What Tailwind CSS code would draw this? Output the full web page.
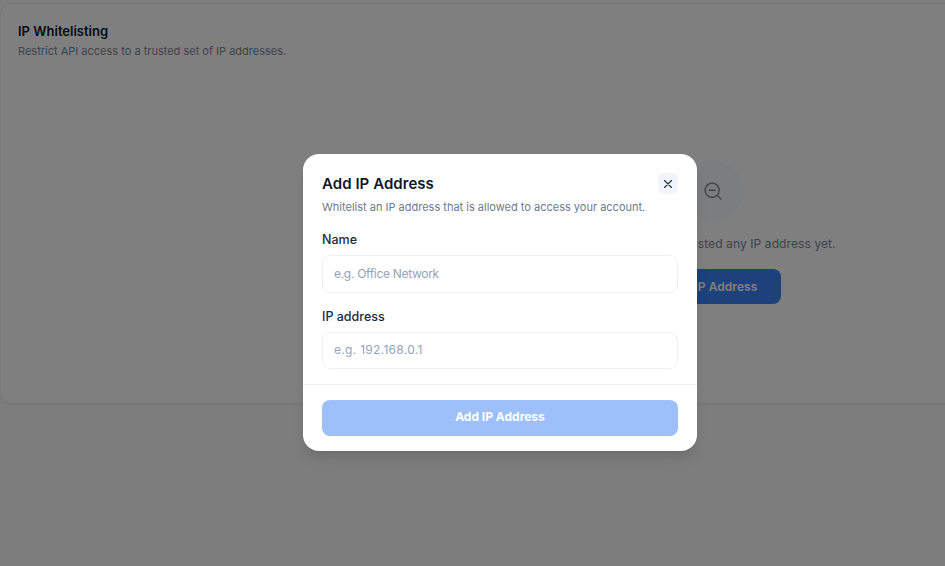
<!DOCTYPE html>
<html lang="en">
  <head>
    <meta charset="UTF-8" />
    <meta name="viewport" content="width=device-width, initial-scale=1.0" />
    <script src="https://cdn.jsdelivr.net/npm/@tailwindcss/browser@4"></script>
    <title>IP Whitelisting</title>
  </head>
  <body class="relative h-[566px] w-[945px] overflow-hidden bg-[#fafafa] font-['Inter',sans-serif]">
    <!-- page behind the modal -->
    <div class="pt-[3px]">
      <section class="h-[401px] w-[1426px] rounded-xl border border-[#eef1f5] bg-white pl-[17px] pt-[18px] shadow-xs">
        <h2 class="text-[13px] leading-[18px] font-semibold text-[#0f172a]">IP Whitelisting</h2>
        <p class="mt-[3px] text-[11px] leading-[16px] text-[#7c8798]">Restrict API access to a trusted set of IP addresses.</p>
        <div class="mt-[102px] flex flex-col items-center pr-[18px]">
          <div class="flex h-[60px] w-[60px] items-center justify-center rounded-full bg-[#f8fafc]">
            <svg class="h-5 w-5 text-[#7c8798]" viewBox="0 0 24 24" fill="none" stroke="currentColor" stroke-width="1.7" stroke-linecap="round">
              <circle cx="11" cy="11" r="8.5" />
              <path d="M7.5 11h7" />
              <path d="M18 18l3.5 3.5" />
            </svg>
          </div>
          <p class="mt-[14px] text-[12px] leading-[18px] tracking-[0.1px] text-[#7c8798]">You haven't whitelisted any IP address yet.</p>
          <button class="mt-[16px] h-[35px] w-[136px] rounded-lg bg-[#3b82f6] text-[12px] font-semibold tracking-[0.05px] text-white">Add IP Address</button>
        </div>
      </section>
    </div>

    <!-- modal -->
    <div class="absolute top-0 left-0 flex h-[566px] w-[1000px] justify-center bg-black/50 pt-[154px]">
      <div class="h-[297px] w-[394px] rounded-[16px] bg-white shadow-lg">
        <div class="px-[19px] pt-[20px]">
          <div class="flex items-start justify-between">
            <h3 class="text-[15px] leading-[20px] font-semibold tracking-[0.05px] text-[#0f172a]">Add IP Address</h3>
            <button class="-mt-px flex h-[21px] w-[20px] items-center justify-center rounded-md bg-[#f1f5f9] text-[#1e293b]">
              <svg class="h-[10px] w-[10px]" viewBox="0 0 10 10" fill="none" stroke="currentColor" stroke-width="1.1" stroke-linecap="round">
                <path d="M1.5 1.5l7 7M8.5 1.5l-7 7" />
              </svg>
            </button>
          </div>
          <p class="mt-[5px] text-[11px] leading-[16px] text-[#6b7a90]">Whitelist an IP address that is allowed to access your account.</p>
          <label class="mt-[16px] block text-[12.5px] leading-[18px] font-medium text-[#1e293b]">Name</label>
          <input class="mt-[6px] block h-[38px] w-full rounded-lg border border-[#eef2f7] px-[11px] pb-[2px] text-[12px] outline-none placeholder:tracking-[-0.3px] placeholder:text-[#94a3b8]" placeholder="e.g. Office Network" />
          <label class="mt-[15px] block text-[12.5px] leading-[18px] font-medium text-[#1e293b]">IP address</label>
          <input class="mt-[6px] block h-[37px] w-full rounded-lg border border-[#eef2f7] px-[11px] pb-[2px] text-[12px] outline-none placeholder:tracking-[0.3px] placeholder:text-[#94a3b8]" placeholder="e.g. 192.168.0.1" />
        </div>
        <div class="mt-[15px] border-t border-[#eef2f7] px-[19px] pt-[15px]">
          <button class="h-[36px] w-full rounded-lg bg-[#9dbffa] pb-[2px] text-[12px] font-bold text-white">Add IP Address</button>
        </div>
      </div>
    </div>
  </body>
</html>
